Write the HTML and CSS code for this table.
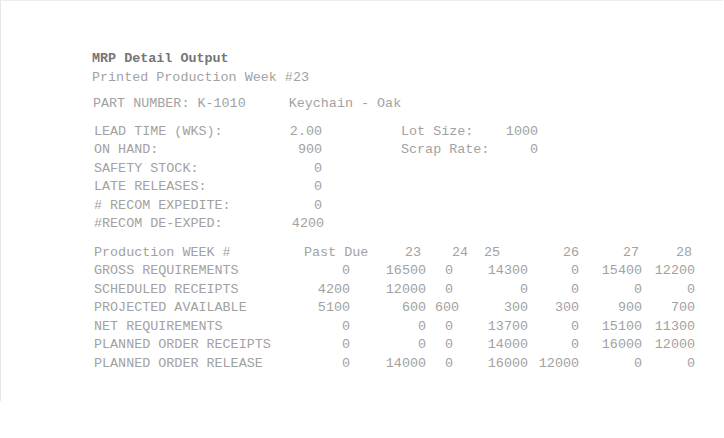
FILE: index.html
```html
<!DOCTYPE html>
<html>
<head>
<meta charset="utf-8">
<link rel="stylesheet" href="styles.css">
</head>
<body>
<div class="page">
  <div class="doc">
    <div class="title">MRP Detail Output</div>
    <div class="line">Printed Production Week #23</div>
    <div class="part">
      <span>PART NUMBER: K-1010</span>
      <span>Keychain - Oak</span>
    </div>

    <div class="info">
      <span>LEAD TIME (WKS):</span><span class="num">2.00</span><span></span><span>Lot Size:</span><span class="num">1000</span>
      <span>ON HAND:</span><span class="num">900</span><span></span><span>Scrap Rate:</span><span class="num">0</span>
      <span>SAFETY STOCK:</span><span class="num">0</span><span></span><span></span><span></span>
      <span>LATE RELEASES:</span><span class="num">0</span><span></span><span></span><span></span>
      <span># RECOM EXPEDITE:</span><span class="num">0</span><span></span><span></span><span></span>
      <span>#RECOM DE-EXPED:</span><span class="num num-wide">4200</span><span></span><span></span><span></span>
    </div>

    <div class="table">
      <div class="head">
        <span>Production WEEK #</span><span>Past Due</span><span>23</span><span>24</span><span>25</span><span>26</span><span>27</span><span>28</span>
      </div>
      <div class="row">
        <span>GROSS REQUIREMENTS</span><span>0</span><span>16500</span><span>0</span><span>14300</span><span>0</span><span>15400</span><span>12200</span>
      </div>
      <div class="row">
        <span>SCHEDULED RECEIPTS</span><span>4200</span><span>12000</span><span>0</span><span>0</span><span>0</span><span>0</span><span>0</span>
      </div>
      <div class="row">
        <span>PROJECTED AVAILABLE</span><span>5100</span><span>600</span><span class="nudge">600</span><span>300</span><span>300</span><span>900</span><span>700</span>
      </div>
      <div class="row">
        <span>NET REQUIREMENTS</span><span>0</span><span>0</span><span>0</span><span>13700</span><span>0</span><span>15100</span><span>11300</span>
      </div>
      <div class="row">
        <span>PLANNED ORDER RECEIPTS</span><span>0</span><span>0</span><span>0</span><span>14000</span><span>0</span><span>16000</span><span>12000</span>
      </div>
      <div class="row">
        <span>PLANNED ORDER RELEASE</span><span>0</span><span>14000</span><span>0</span><span>16000</span><span>12000</span><span>0</span><span>0</span>
      </div>
    </div>
  </div>
</div>
</body>
</html>
```

FILE: styles.css
```css
html, body {
  margin: 0;
  padding: 0;
  background: #ffffff;
}

.page {
  width: 723px;
  height: 401px;
  border-top: 1px solid #ececec;
  border-left: 1px solid #e6e6e6;
  box-sizing: border-box;
}

.doc {
  padding: 49px 0 0 93px;
  font-family: "Liberation Mono", monospace;
  font-size: 13.4px;
  line-height: 18.5px;
  color: #a2a2a2;
}

.doc span,
.doc div {
  white-space: nowrap;
}

.title {
  font-weight: bold;
  color: #757575;
  margin-left: -2px;
}

.line {
  margin-left: -2px;
}

.part {
  display: flex;
  gap: 43px;
  margin-top: 7.6px;
  margin-left: -1px;
}

.info {
  display: grid;
  grid-template-columns: 187px 41px 79px 90px 47px;
  margin-top: 9.5px;
}

.info .num {
  text-align: right;
}

.info .num-wide {
  margin-right: -2px;
}

.table {
  margin-top: 10px;
}

.head,
.row {
  display: grid;
}

.head {
  grid-template-columns: 210px 64px 53px 47px 32px 79px 60px 53px;
}

.row {
  grid-template-columns: 197px 59px 76px 27px 75px 51px 63px 53px;
}

.head span,
.row span {
  text-align: right;
}

.head span:first-child,
.row span:first-child {
  text-align: left;
}

.row .nudge {
  margin-right: -6px;
}
```
